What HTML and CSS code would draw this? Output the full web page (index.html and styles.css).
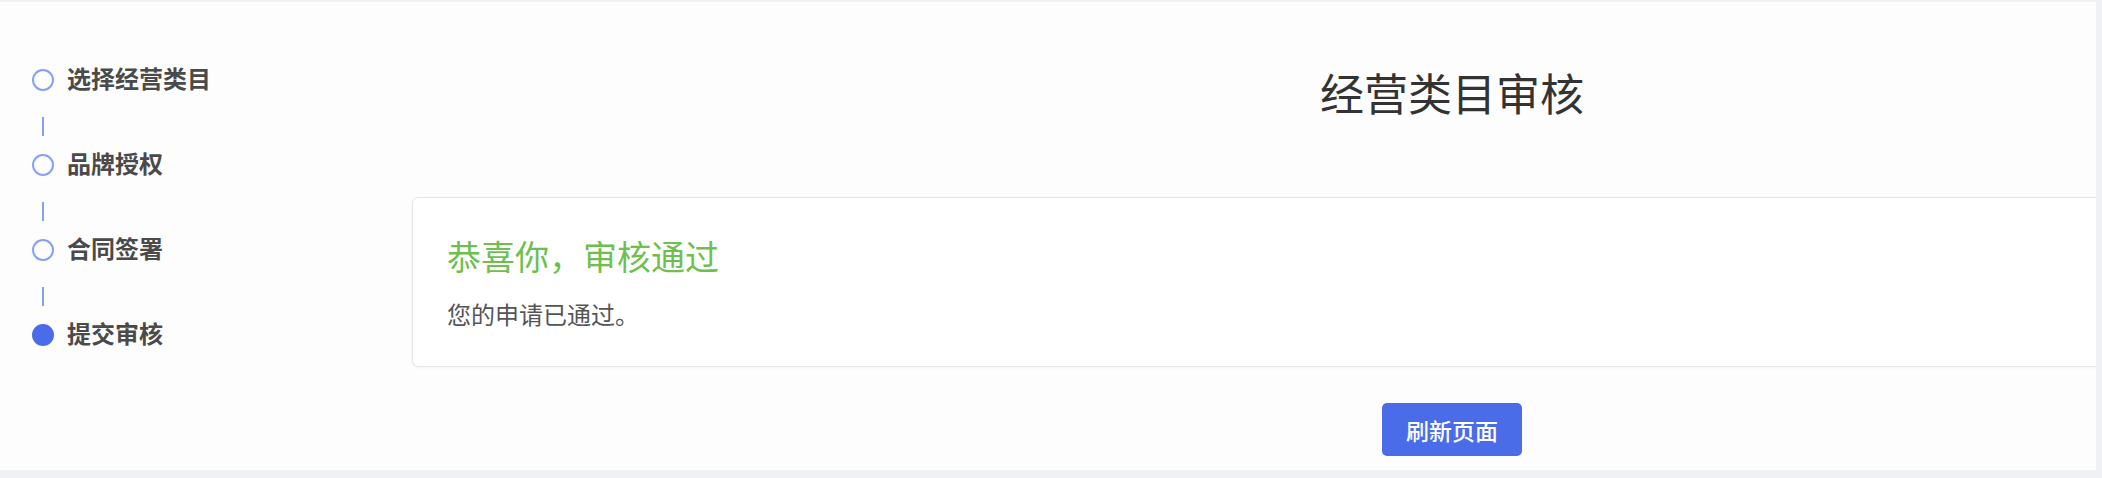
FILE: index.html
```html
<!DOCTYPE html>
<html lang="zh-CN">
<head>
<meta charset="utf-8">
<title>经营类目审核</title>
<link rel="stylesheet" href="styles.css">
</head>
<body>
<div class="panel">
  <aside class="steps">
    <div class="step"><span class="dot"></span><span class="label">选择经营类目</span></div>
    <div class="connector"><span class="line"></span></div>
    <div class="step"><span class="dot"></span><span class="label">品牌授权</span></div>
    <div class="connector"><span class="line"></span></div>
    <div class="step"><span class="dot"></span><span class="label">合同签署</span></div>
    <div class="connector"><span class="line"></span></div>
    <div class="step active"><span class="dot"></span><span class="label">提交审核</span></div>
  </aside>
  <main class="main">
    <h1 class="title">经营类目审核</h1>
    <section class="card">
      <h2 class="result">恭喜你，审核通过</h2>
      <p class="desc">您的申请已通过。</p>
    </section>
    <div class="actions"><button class="btn" type="button">刷新页面</button></div>
  </main>
</div>
</body>
</html>
```
FILE: styles.css
```css
html, body {
  margin: 0;
  padding: 0;
}
body {
  background: #eff1f5;
  font-family: "Noto Sans CJK SC", "Noto Sans", sans-serif;
  width: 2102px;
  height: 478px;
  overflow: hidden;
}
.panel {
  margin-top: 2px;
  width: 2096px;
  height: 468px;
  background: #fdfdfd;
  display: flex;
  overflow: hidden;
}
.steps {
  width: 412px;
  flex-shrink: 0;
  padding-top: 67px;
  box-sizing: border-box;
  display: flex;
  flex-direction: column;
}
.step {
  height: 22px;
  display: flex;
  align-items: center;
  padding-left: 32px;
}
.dot {
  width: 22px;
  height: 22px;
  box-sizing: border-box;
  border: 2.5px solid #86a0f5;
  border-radius: 50%;
  flex-shrink: 0;
}
.step.active .dot {
  background: #4a6ce8;
  border-color: #4a6ce8;
}
.label {
  margin-left: 13px;
  padding-bottom: 4px;
  font-size: 24px;
  line-height: 24px;
  font-weight: 600;
  color: #4a4a4a;
}
.connector {
  height: 63px;
  padding-top: 26px;
  box-sizing: border-box;
  padding-left: 42px;
}
.line {
  display: block;
  width: 2px;
  height: 19px;
  background: #86a0f5;
}
.main {
  width: 2080px;
  flex-shrink: 0;
  display: flex;
  flex-direction: column;
}
.title {
  margin: 60px 0 0;
  text-align: center;
  font-size: 44px;
  line-height: 60px;
  font-weight: 400;
  color: #333;
}
.card {
  margin-top: 75px;
  height: 170px;
  box-sizing: border-box;
  border: 1px solid #e3e5e9;
  border-radius: 6px;
  background: #fff;
  box-shadow: 0 1px 3px rgba(0, 0, 0, 0.04);
  padding: 38px 34px 0;
}
.result {
  margin: 0;
  font-size: 34px;
  line-height: 40px;
  font-weight: 400;
  color: #6ebf50;
}
.desc {
  margin: 23px 0 0;
  font-size: 24px;
  line-height: 30px;
  color: #555;
}
.actions {
  margin-top: 36px;
  display: flex;
  justify-content: center;
}
.btn {
  width: 140px;
  height: 53px;
  border: none;
  border-radius: 5px;
  background: #4a6ce8;
  color: #fff;
  font-family: "Noto Sans CJK SC", "Noto Sans", sans-serif;
  font-size: 23px;
  font-weight: 500;
  padding: 0;
}
```
